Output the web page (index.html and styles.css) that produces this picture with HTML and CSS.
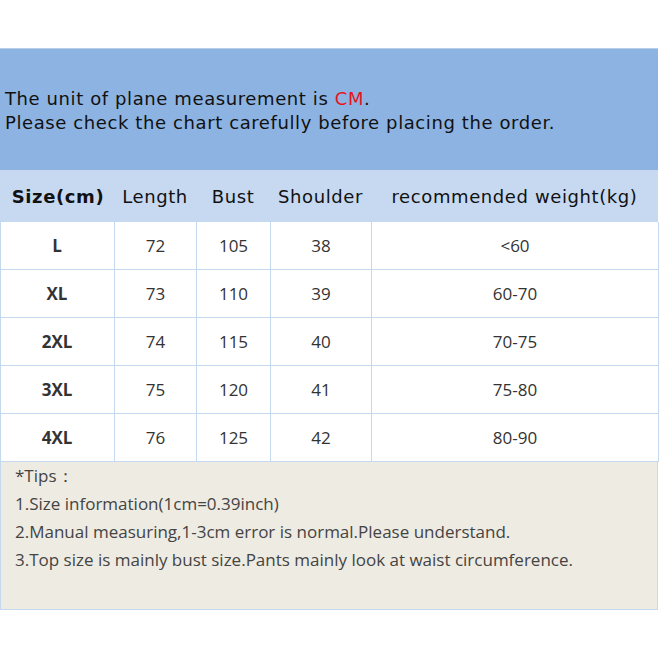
FILE: index.html
```html
<!DOCTYPE html>
<html>
<head>
<meta charset="utf-8">
<link rel="stylesheet" href="styles.css">
</head>
<body>
<div class="chart">
  <div class="intro">
    <p>The unit of plane measurement is <span class="red">CM</span>.</p>
    <p>Please check the chart carefully before placing the order.</p>
  </div>
  <div class="head">
    <div class="hc first">Size(cm)</div>
    <div class="hc">Length</div>
    <div class="hc">Bust</div>
    <div class="hc">Shoulder</div>
    <div class="hc">recommended weight(kg)</div>
  </div>
  <div class="grid">
    <div class="c lbl">L</div><div class="c">72</div><div class="c">105</div><div class="c">38</div><div class="c">&lt;60</div>
    <div class="c lbl">XL</div><div class="c">73</div><div class="c">110</div><div class="c">39</div><div class="c">60-70</div>
    <div class="c lbl">2XL</div><div class="c">74</div><div class="c">115</div><div class="c">40</div><div class="c">70-75</div>
    <div class="c lbl">3XL</div><div class="c">75</div><div class="c">120</div><div class="c">41</div><div class="c">75-80</div>
    <div class="c lbl">4XL</div><div class="c">76</div><div class="c">125</div><div class="c">42</div><div class="c">80-90</div>
  </div>
  <div class="tips">
    <p>*Tips：</p>
    <p>1.Size information(1cm=0.39inch)</p>
    <p>2.Manual measuring,1-3cm error is normal.Please understand.</p>
    <p>3.Top size is mainly bust size.Pants mainly look at waist circumference.</p>
  </div>
</div>
</body>
</html>
```

FILE: styles.css
```css
html, body {
  margin: 0;
  padding: 0;
  background: #ffffff;
}
body {
  width: 659px;
  height: 659px;
  overflow: hidden;
}
p { margin: 0; }
.chart {
  margin-top: 48px;
  width: 658px;
}
.intro {
  height: 122px;
  border-top: 1px solid #b8cde6;
  background: #8db3e2;
  display: flex;
  flex-direction: column;
  justify-content: center;
  padding-left: 5px;
  font-family: "DejaVu Sans", Verdana, sans-serif;
  font-size: 18px;
  letter-spacing: 0.6px;
  line-height: 24px;
  color: #111;
  padding-top: 2px;
  box-sizing: border-box;
}
.red { color: #e8141c; }
.head {
  display: grid;
  grid-template-columns: 114px 82px 74px 101px 287px;
  height: 52px;
  background: #c6d9f1;
  font-family: "DejaVu Sans", Verdana, sans-serif;
  font-size: 18px;
  letter-spacing: 0.6px;
  color: #111;
}
.hc {
  display: flex;
  align-items: center;
  justify-content: center;
}
.hc.first { font-weight: bold; padding-left: 2px; }
.grid {
  display: grid;
  grid-template-columns: 114px 82px 74px 101px 287px;
  grid-auto-rows: 48px;
  border-left: 1px solid #c5d9ee;
  font-family: "Open Sans", "Noto Sans", sans-serif;
  font-size: 17px;
  color: #333;
}
.c {
  display: flex;
  align-items: center;
  justify-content: center;
  border-right: 1px solid #c5d9ee;
  border-bottom: 1px solid #c5d9ee;
}
.grid .c:nth-child(5n+1) { margin-left: -1px; }
.lbl { font-weight: bold; }
.tips {
  height: 148px;
  box-sizing: border-box;
  background: #eeebe2;
  border-left: 1px solid #c5d9ee;
  border-right: 1px solid #c5d9ee;
  border-bottom: 1px solid #c5d9ee;
  padding: 0 0 0 14px;
  font-family: "Open Sans", "Noto Sans", sans-serif;
  font-size: 17px;
  line-height: 28px;
  color: #444;
}
```
